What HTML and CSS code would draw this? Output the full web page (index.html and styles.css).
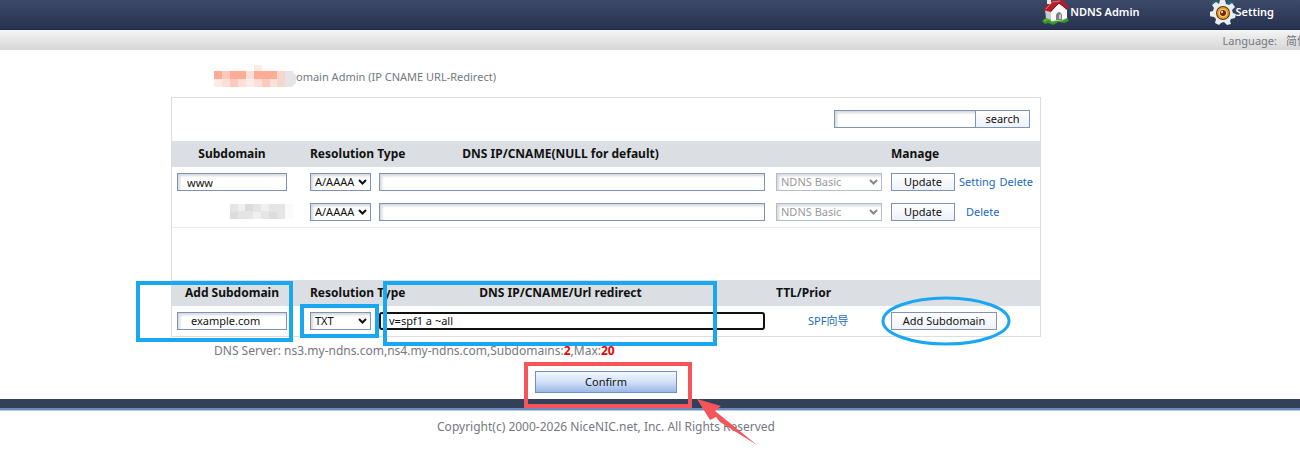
FILE: index.html
```html
<!DOCTYPE html>
<html lang="en">
<head>
    <meta charset="UTF-8">
    <meta name="viewport" content="width=device-width, initial-scale=1.0">
    <title>NDNS Admin</title>
    <link rel="stylesheet" href="styles.css">
</head>
<body>
    <header class="topbar">
        <a class="nav-link" href="#">
            <svg width="28" height="26" viewBox="0 0 28 26" aria-hidden="true">
                <path d="M0 22l4-4 3 2 6-2 7 1 4-3 2 4 1 2-5 2-5-1-6 3-5-2-3 1z" fill="#35942f"/>
                <path d="M2 22l5-2 3 3 5-2 4 1 6-3" fill="none" stroke="#75c94d"/>
                <path d="M3 11l7-2v12l-6-2z" fill="#c9cacf"/>
                <path d="M9 12l8-8 8 6v9l-5 2-11 1z" fill="#fafafa"/>
                <path d="M14 21v-5q1-3 3-3t3 3v5z" fill="#7b8087"/>
                <path d="M17 20v-4l2-1v5z" fill="#c9ccd0"/>
                <path d="M1 11L9 2l12-1 6 8-2 2-8-7-8 9z" fill="#b51f2a"/>
                <path d="M4 10l6-7 8-1" fill="none" stroke="#ef6c70"/>
                <path d="M9 12l8-8 8 6" fill="none" stroke="#7d1019"/>
                <path d="M5 0h4v5H5z" fill="#e8e8e8"/>
            </svg>
            <span>NDNS Admin</span>
        </a>
        <a class="nav-link" href="#">
            <svg width="26" height="26" viewBox="0 0 26 26" aria-hidden="true">
                <path d="M1 3l6-2 3 5-5 4zM19 1l5 3-3 5-5-4z" fill="#246278"/>
                <path d="M10 1h5l1 4 3 1 3-2 3 4-3 3 1 3 3 1-1 4-4 1-1 2 1 3-4 1-3-3-3 1-2 2-4-2 1-4-2-2-5-1v-4l4-1 1-3-2-3 4-3 3 2z" fill="#e9edf0"/>
                <circle cx="13" cy="14" r="7" fill="#583012"/>
                <circle cx="13" cy="14" r="6" fill="#f09a22"/>
                <circle cx="13" cy="14" r="4" fill="#ffd18a"/>
                <circle cx="13" cy="14" r="3" fill="#6c2d0d"/>
                <circle cx="12" cy="13" r="1" fill="#fff"/>
            </svg>
            <span>Setting</span>
        </a>
    </header>
    <div class="language-bar">
        <span>Language:</span>
        <a class="language-link" href="#">简体中文</a>
    </div>

    <div class="content">
        <main class="container">
            <h1 class="page-title">
                <svg class="mask" width="82" height="24" viewBox="0 0 82 24" aria-hidden="true">
                    <path d="M0 6h79v16H0z" fill="#fde0d8"/>
                    <path d="M0 6h8v8H0zM16 6h16v8H16zM40 6h23v8H40z" fill="#ffac94"/>
                    <path d="M8 6h8v8H8zM16 14h8v8h-8zM48 14h8v8h-8z" fill="#ffc9bb"/>
                    <path d="M40 0h8v6h-8zM32 14h8v8h-8zM0 14h8v8H0z" fill="#feebe5"/>
                    <path d="M71 6h4q8 2 8 8t-8 8h-4z" fill="#e5e5e7"/>
                    <path d="M63 6h8v16h-8z" fill="#f7d6ce"/>
                </svg>
                <span>omain Admin (IP CNAME URL-Redirect)</span>
            </h1>

            <div class="panel">
                <form class="search-form">
                    <input class="field search-input" type="text" aria-label="Search subdomain">
                    <button class="btn search-button" type="button">search</button>
                </form>

                <table class="records">
                    <colgroup>
                        <col class="col-name">
                        <col class="col-type">
                        <col>
                        <col class="col-line">
                        <col class="col-manage">
                    </colgroup>
                    <thead>
                        <tr>
                            <th class="name-cell">Subdomain</th>
                            <th class="left">Resolution Type</th>
                            <th class="value-head">DNS IP/CNAME(NULL for default)</th>
                            <th></th>
                            <th class="left">Manage</th>
                        </tr>
                    </thead>
                    <tbody>
                        <tr>
                            <td class="name-cell"><input class="field" type="text" value="www" aria-label="Subdomain"></td>
                            <td><select class="field select" aria-label="Resolution type"><option>A/AAAA</option><option>TXT</option></select></td>
                            <td class="value-cell"><input class="field" type="text" aria-label="DNS IP/CNAME"></td>
                            <td><select class="field select line-select" aria-label="Line" disabled><option>NDNS Basic</option></select></td>
                            <td>
                                <div class="actions">
                                    <button class="btn update-button" type="button">Update</button>
                                    <a href="#">Setting</a>
                                    <a href="#">Delete</a>
                                </div>
                            </td>
                        </tr>
                        <tr class="last-row">
                            <td class="name-cell masked">
                                <svg class="mask" width="63" height="17" viewBox="0 0 63 17" aria-hidden="true">
                                    <path d="M0 1h55v15H0z" fill="#e5e5e6"/>
                                    <path d="M8 1h7v7H8zM31 1h8v7h-8zM23 9h8v7h-8z" fill="#f0f0f1"/>
                                    <path d="M15 1h8v7h-8zM0 9h8v7H0zM39 9h8v7h-8z" fill="#dcdcde"/>
                                    <path d="M55 1h8v15h-8z" fill="#fafafa"/>
                                </svg>
                            </td>
                            <td><select class="field select" aria-label="Resolution type"><option>A/AAAA</option><option>TXT</option></select></td>
                            <td class="value-cell"><input class="field" type="text" aria-label="DNS IP/CNAME"></td>
                            <td><select class="field select line-select" aria-label="Line" disabled><option>NDNS Basic</option></select></td>
                            <td>
                                <div class="actions single">
                                    <button class="btn update-button" type="button">Update</button>
                                    <a href="#">Delete</a>
                                </div>
                            </td>
                        </tr>
                    </tbody>
                </table>

                <table class="records add-records">
                    <colgroup>
                        <col class="col-name">
                        <col class="col-type">
                        <col>
                        <col class="col-line">
                        <col class="col-manage">
                    </colgroup>
                    <thead>
                        <tr>
                            <th class="name-cell">Add Subdomain</th>
                            <th class="left">Resolution Type</th>
                            <th class="value-head">DNS IP/CNAME/Url redirect</th>
                            <th class="left">TTL/Prior</th>
                            <th></th>
                        </tr>
                    </thead>
                    <tbody>
                        <tr>
                            <td class="name-cell"><input class="field new-name" type="text" value="example.com" aria-label="New subdomain"></td>
                            <td><select class="field select" aria-label="Resolution type"><option>TXT</option><option>A/AAAA</option></select></td>
                            <td class="value-cell"><input class="field focused" type="text" value="v=spf1 a ~all" aria-label="Record value"></td>
                            <td class="wizard-cell"><a href="#">SPF向导</a></td>
                            <td><button class="btn add-button" type="button">Add Subdomain</button></td>
                        </tr>
                    </tbody>
                </table>
            </div>

            <p class="server-info">DNS Server: ns3.my-ndns.com,ns4.my-ndns.com,Subdomains:<b>2</b>,Max:<b>20</b></p>
            <button class="confirm-button" type="button">Confirm</button>

            <!-- Highlights over the fields and buttons -->
            <svg class="marks" width="870" height="414" viewBox="171 50 870 414" aria-hidden="true">
                <g fill="none" stroke="#1aa7f2" stroke-width="4">
                    <rect x="138" y="283" width="153" height="57"/>
                    <rect x="302" y="306" width="75" height="30"/>
                    <rect x="385" y="283" width="330" height="61"/>
                    <ellipse cx="946" cy="321" rx="63" ry="23" stroke-width="3"/>
                </g>
                <rect x="526" y="364" width="164" height="42" fill="none" stroke="#f55558" stroke-width="4"/>
                <path d="M697 399l24 7-6 5 42 34-37-23-4-5-6 3z" fill="#f55558"/>
            </svg>
        </main>
    </div>

    <footer class="footer">Copyright(c) 2000-2026 NiceNIC.net, Inc. All Rights Reserved</footer>
</body>
</html>
```
FILE: styles.css
```css
* {
    box-sizing: border-box;
}

body {
    margin: 0;
    background: #fff;
    color: #74787f;
    font-family: "Noto Sans", "Noto Sans CJK SC", sans-serif;
    font-size: 11px;
    line-height: 16px;
    overflow-x: hidden;
}

a {
    color: #1b6ac0;
    text-decoration: none;
}

svg {
    display: block;
}

.topbar {
    display: flex;
    justify-content: flex-end;
    gap: 70px;
    height: 30px;
    padding-right: 26px;
    background: linear-gradient(#3c4969, #27324f);
    border-bottom: 1px solid #202a42;
}

.nav-link {
    display: flex;
    height: 24px;
    align-items: center;
    color: #fff;
    font-weight: 600;
}

.language-bar {
    display: flex;
    justify-content: flex-end;
    align-items: center;
    gap: 9px;
    height: 20px;
    padding-top: 2px;
    background: linear-gradient(#f5f5f5, #d6d6d6);
}

.language-link {
    width: 14px;
    overflow: hidden;
    white-space: nowrap;
    color: #74787f;
}

.content {
    padding-right: 88px;
}

.container {
    position: relative;
    max-width: 870px;
    margin: 0 auto;
}

.page-title {
    display: flex;
    align-items: center;
    height: 47px;
    margin: 0;
    padding: 6px 0 0 43px;
    font-size: 11px;
    font-weight: normal;
}

.panel {
    border: 1px solid #dcdee3;
}

.search-form {
    display: flex;
    justify-content: flex-end;
    padding: 12px 10px 13px;
}

.field,
.btn {
    height: 18px;
    border: 1px solid #7f93b5;
    border-radius: 0;
    color: #111;
    font: inherit;
}

.field {
    display: block;
    width: 100%;
    padding: 0 9px;
    background: #fff;
    box-shadow: inset 2px 2px 3px #d5d7dc;
}

.search-input {
    width: 142px;
}

.btn {
    padding: 0;
    background: linear-gradient(#fff, #eef1f9);
    line-height: 14px;
    cursor: pointer;
}

.search-button {
    width: 54px;
    border-left: 0;
}

.records {
    width: 100%;
    table-layout: fixed;
    border-collapse: collapse;
}

.col-name {
    width: 138px;
}

.col-type {
    width: 69px;
}

.col-line {
    width: 115px;
}

.col-manage {
    width: 149px;
}

th {
    height: 26px;
    padding: 0;
    background: #dbdee3;
    color: #111;
    font-size: 12px;
    white-space: nowrap;
}

th.left {
    text-align: left;
}

.value-head {
    padding-right: 34px;
}

td {
    height: 30px;
    padding: 0;
}

.last-row td {
    border-bottom: 1px solid #e9eaed;
}

.name-cell {
    padding: 0 23px 0 5px;
}

.masked .mask {
    margin-left: 53px;
}

.value-cell {
    padding-right: 11px;
}

.select {
    appearance: none;
    width: 61px;
    padding: 0 4px;
    background: #fff url("data:image/svg+xml,%3Csvg xmlns='http://www.w3.org/2000/svg' width='9' height='6'%3E%3Cpath d='M1 1l3.500 3.500L8 1' fill='none' stroke='%23111' stroke-width='2'/%3E%3C/svg%3E") no-repeat right 3px center;
}

.line-select {
    width: 106px;
}

.select:disabled {
    border-color: #b5bdcb;
    color: #999;
    opacity: 1;
    background-image: url("data:image/svg+xml,%3Csvg xmlns='http://www.w3.org/2000/svg' width='9' height='6'%3E%3Cpath d='M1 1l3.500 3.500L8 1' fill='none' stroke='%23888' stroke-width='2'/%3E%3C/svg%3E");
}

.actions {
    display: flex;
    align-items: center;
    gap: 4px;
    white-space: nowrap;
}

.actions.single {
    gap: 11px;
}

.update-button {
    width: 64px;
}

.add-records {
    margin-top: 52px;
}

.new-name {
    padding-left: 13px;
}

.focused {
    border: 2px solid #111;
    border-radius: 3px;
    padding: 0 8px;
    box-shadow: none;
    outline: none;
}

.wizard-cell {
    padding-left: 32px;
}

.add-button {
    width: 106px;
}

.server-info {
    margin: 0;
    padding: 6px 43px 0;
    font-size: 12px;
}

.server-info b {
    color: #f00000;
}

.confirm-button {
    display: block;
    width: 142px;
    height: 22px;
    margin: 12px auto 6px;
    padding: 0;
    border: 1px solid #6f93c2;
    background: linear-gradient(#f2f7ff, #d3e1f7 50%, #98b8e8);
    color: #111;
    font: inherit;
    cursor: pointer;
}

.marks {
    position: absolute;
    top: 0;
    left: 0;
    overflow: visible;
    pointer-events: none;
}

.footer {
    padding: 11px 88px 28px 0;
    border-top: 9px solid #334059;
    box-shadow: inset 0 2px #6d8aba, inset 0 3px #b9c9e2;
    font-size: 12px;
    text-align: center;
}
```
